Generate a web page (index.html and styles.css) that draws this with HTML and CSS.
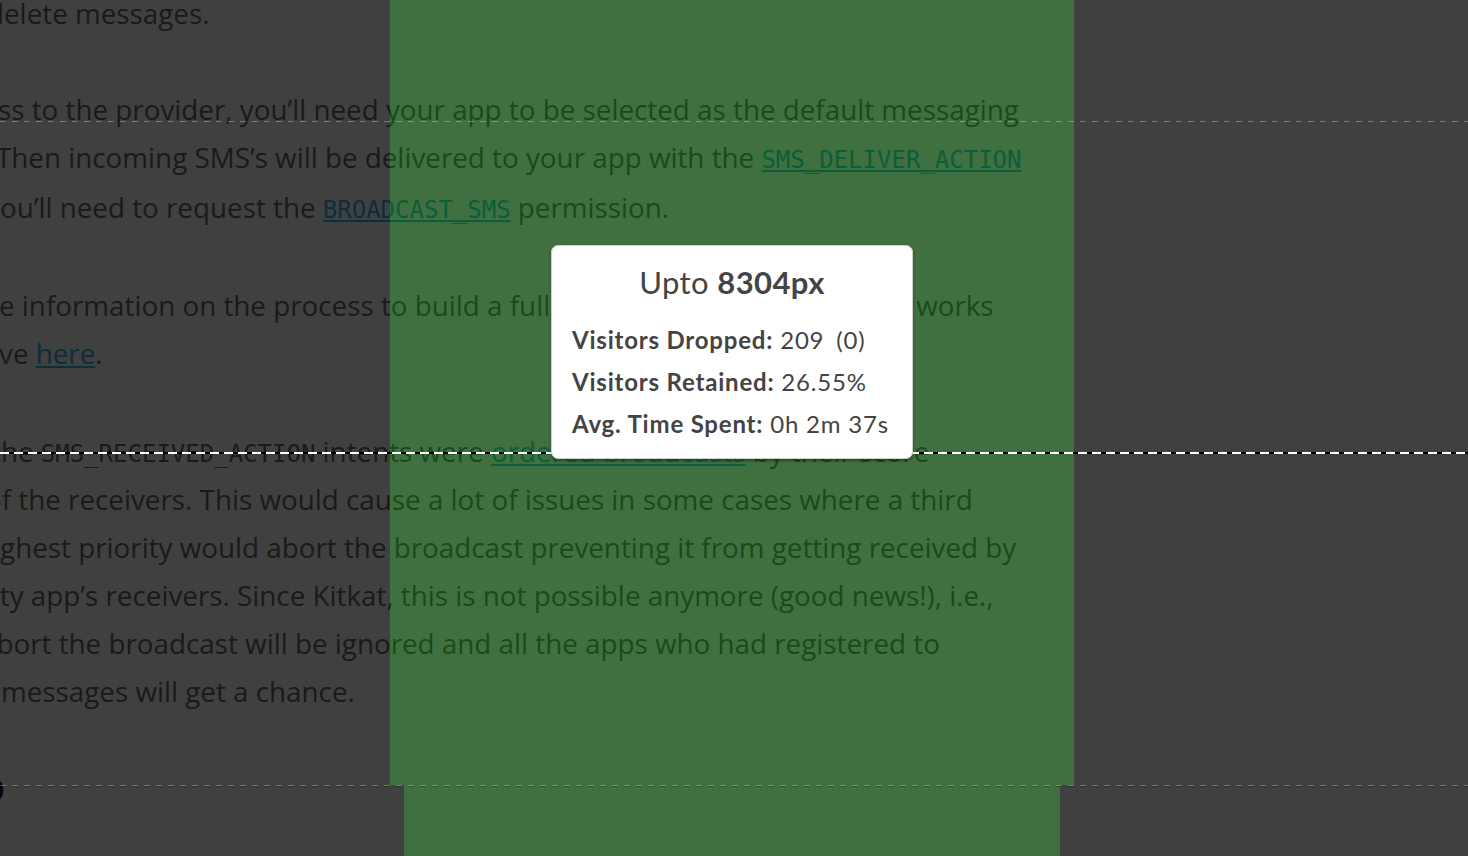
FILE: index.html
```html
<!DOCTYPE html>
<html lang="en">
<head>
<meta charset="utf-8">
<title>Scroll map</title>
<link rel="stylesheet" href="styles.css">
</head>
<body>
<main class="article">
  <p class="para para-first">
    <span class="ln s13">delete messages.</span>
  </p>
  <p class="para">
    <span class="ln s2">ss to the provider, you’ll need your app to be selected as the default messaging</span>
    <span class="ln s4">Then incoming SMS’s will be delivered to your app with the <a class="link code">SMS_DELIVER_ACTION</a></span>
    <span class="ln s14 ln-after-code">you’ll need to request the <a class="link code">BROADCAST_SMS</a> permission.</span>
  </p>
  <p class="para">
    <span class="ln s1">e information on the process to build a full-fledged SMS-MMS app that works</span>
    <span class="ln s1">ve <a class="link">here</a>.</span>
  </p>
  <p class="para">
    <span class="ln s9">the <span class="code">SMS_RECEIVED_ACTION</span> intents were <a class="link">ordered broadcasts</a> by their score</span>
    <span class="ln s15">of the receivers. This would cause a lot of issues in some cases where a third</span>
    <span class="ln s24">highest priority would abort the broadcast preventing it from getting received by</span>
    <span class="ln s44">party app’s receivers. Since Kitkat, this is not possible anymore (good news!), i.e.,</span>
    <span class="ln s19">abort the broadcast will be ignored and all the apps who had registered to</span>
    <span class="ln s0">messages will get a chance.</span>
  </p>
  <h3 class="heading"><span class="s20">O</span></h3>
</main>

<div class="overlay">
  <div class="band band-top">
    <div class="shade shade-top"></div>
    <div class="green green-top"></div>
    <div class="shade shade-fill"></div>
  </div>
  <div class="band band-bottom">
    <div class="shade shade-bottom"></div>
    <div class="green green-bottom"></div>
    <div class="shade shade-fill"></div>
  </div>
</div>

<div class="mark mark-light"></div>
<div class="mark mark-fold"></div>
<div class="mark mark-avg"></div>

<div class="tooltip">
  <div class="tip-title">Upto <b>8304px</b></div>
  <div class="tip-row"><b>Visitors Dropped:</b> 209 <span class="tip-sub">(0)</span></div>
  <div class="tip-row"><b>Visitors Retained:</b> 26.55%</div>
  <div class="tip-row"><b>Avg. Time Spent:</b> 0h 2m 37s</div>
</div>
</body>
</html>
```

FILE: styles.css
```css
html, body {
  margin: 0;
  padding: 0;
}

body {
  width: 1468px;
  height: 856px;
  overflow: hidden;
  position: relative;
  background: #ffffff;
  font-family: "Open Sans", "DejaVu Sans", sans-serif;
}

.article {
  margin-top: -11px;
  color: #6a6a6a;
  font-size: 27.8px;
  line-height: 48px;
}

.para {
  margin: 0 0 50px;
}

.para-first {
  margin-bottom: 48px;
}

.ln {
  display: block;
  white-space: nowrap;
}

.ln-after-code {
  margin-top: 2px;
}

.s0 { margin-left: 1px; }
.s1 { margin-left: -1px; }
.s2 { margin-left: -2px; }
.s4 { margin-left: -4px; }
.s9 { margin-left: -9px; }
.s13 { margin-left: -13px; }
.s14 { margin-left: -14px; }
.s15 { margin-left: -15px; }
.s19 { margin-left: -19px; }
.s24 { margin-left: -24px; }
.s44 { margin-left: -44px; }
.s20 { margin-left: -22px; display: inline-block; }

.code {
  font-family: "DejaVu Sans Mono", monospace;
  font-size: 24px;
  line-height: 24px;
}

.link {
  color: #33b5e5;
  text-decoration: underline;
  text-decoration-thickness: 2px;
  text-underline-offset: 2px;
}

.heading {
  margin: 0;
  font-size: 34px;
  line-height: 48px;
  font-weight: 700;
  color: #111;
}

/* scroll-map shading */
.overlay {
  position: absolute;
  inset: 0;
  display: flex;
  flex-direction: column;
}

.band {
  display: flex;
}

.band-top {
  height: 785px;
}

.band-bottom {
  flex: 1;
}

.shade {
  background: rgba(0, 0, 0, 0.75);
}

.green {
  background: rgba(0, 64, 0, 0.75);
}

.shade-top { width: 390px; }
.green-top { width: 684px; }
.shade-bottom { width: 404px; }
.green-bottom { width: 656px; }
.shade-fill { flex: 1; }

/* depth markers */
.mark {
  position: absolute;
  left: 0;
  right: 0;
}

.mark-light {
  top: 121px;
  height: 1px;
  background: repeating-linear-gradient(90deg, rgba(255, 255, 255, 0.3) 0 6px, transparent 6px 12px);
}

.mark-fold {
  top: 452px;
  height: 2px;
  background: repeating-linear-gradient(90deg, #ffffff 0 9px, #000000 9px 14px);
}

.mark-avg {
  top: 785px;
  height: 2px;
  background:
    repeating-linear-gradient(90deg, rgba(255, 255, 255, 0.3) 0 6px, transparent 6px 12px) top / 100% 1px no-repeat,
    repeating-linear-gradient(90deg, rgba(0, 0, 0, 0.3) 0 6px, transparent 6px 12px) bottom / 100% 1px no-repeat;
}

/* tooltip */
.tooltip {
  position: absolute;
  left: 551px;
  top: 245px;
  width: 362px;
  height: 214px;
  box-sizing: border-box;
  padding: 16px 20px 0;
  background: #ffffff;
  border: 1px solid #cfcfcf;
  border-radius: 7px;
  box-shadow: 0 2px 3px rgba(0, 0, 0, 0.35);
  font-family: Lato, "Open Sans", sans-serif;
  color: #444444;
}

.tip-title {
  text-align: center;
  font-size: 31px;
  letter-spacing: 0.4px;
  line-height: 40px;
  margin-bottom: 17px;
}

.tip-title b {
  font-weight: 700;
}

.tip-row {
  font-size: 24px;
  letter-spacing: 0.8px;
  line-height: 42px;
  white-space: nowrap;
}

.tip-row b {
  font-weight: 700;
}

.tip-sub {
  margin-left: 5px;
}
```
